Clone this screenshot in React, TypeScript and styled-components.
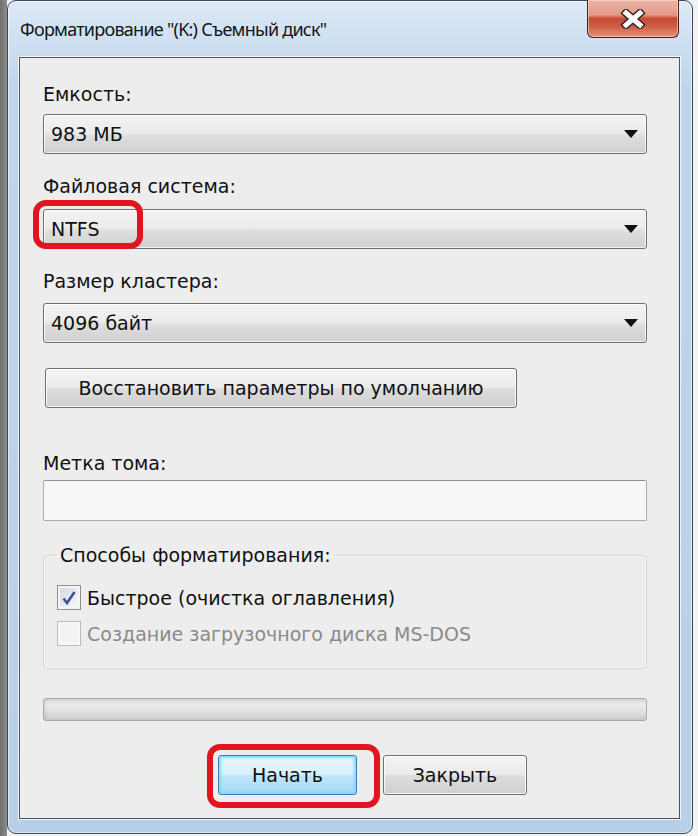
import styled, { createGlobalStyle } from "styled-components";

const GlobalStyle = createGlobalStyle`
  html, body {
    margin: 0;
    padding: 0;
  }
  body {
    width: 698px;
    height: 836px;
    overflow: hidden;
    background: linear-gradient(90deg, #6f6f6f 0, #8d8d8d 7px, #f3f3f3 7px);
    font-family: "DejaVu Sans", "Liberation Sans", sans-serif;
  }
`;

const Window = styled.div`
  box-sizing: border-box;
  margin-left: 7px;
  width: 686px;
  height: 834px;
  border: 1px solid #3b4656;
  border-radius: 9px;
  background: linear-gradient(180deg, #dde9f6 0%, #d2e2f2 30px, #bfd5eb 90px, #b8cfe8 100%);
  box-shadow: inset 0 0 0 1px rgba(255, 255, 255, 0.55);
  display: flex;
  flex-direction: column;
  padding: 0 12px 14px 11px;
`;

const TitleBar = styled.div`
  height: 56px;
  display: flex;
  justify-content: space-between;
  align-items: flex-start;
`;

const Title = styled.div`
  padding-left: 1px;
  font-family: "Noto Sans", sans-serif;
  font-size: 18px;
  letter-spacing: -0.75px;
  line-height: 56px;
  color: #151515;
`;

const CloseBtn = styled.div`
  box-sizing: border-box;
  margin: -1px 1px 0 0;
  width: 92px;
  height: 38px;
  border: 1px solid #4b1e17;
  border-top: none;
  border-radius: 0 0 6px 6px;
  background: linear-gradient(180deg, #eab4a6 0%, #e39a87 40%, #c94a34 50%, #cf5c42 70%, #e3937a 100%);
  box-shadow: inset 0 0 0 1px rgba(255, 220, 210, 0.55);
  display: flex;
  align-items: center;
  justify-content: center;
`;

const Client = styled.div`
  flex: 1;
  border: 1px solid #4a5563;
  background: #ededed;
  box-shadow: 0 0 0 1px rgba(255, 255, 255, 0.75);
  padding: 24px 32px 22px 23px;
  display: flex;
  flex-direction: column;
`;

const Label = styled.div<{ $mt?: number }>`
  margin-top: ${(p) => p.$mt ?? 0}px;
  height: 24px;
  font-size: 19px;
  line-height: 24px;
  color: #111;
`;

const Combo = styled.div<{ $mt: number }>`
  position: relative;
  box-sizing: border-box;
  margin-top: ${(p) => p.$mt}px;
  height: 40px;
  border: 1px solid #707070;
  border-radius: 3px;
  background: linear-gradient(180deg, #f3f3f3 0%, #ececec 45%, #dedede 55%, #d0d0d0 100%);
  box-shadow: inset 0 0 0 1px rgba(255, 255, 255, 0.7);
  display: flex;
  align-items: center;
  justify-content: space-between;
  padding: 0 8px 0 7px;
  font-size: 19px;
  color: #111;
`;

const Mark = styled.span<{ $l: number; $t: number; $w: number; $h: number }>`
  position: absolute;
  left: ${(p) => p.$l}px;
  top: ${(p) => p.$t}px;
  width: ${(p) => p.$w}px;
  height: ${(p) => p.$h}px;
  box-sizing: border-box;
  border: 6px solid #e1141f;
  border-radius: 13px;
  pointer-events: none;
`;

const Button = styled.button<{ $w: number; $mt?: number; $default?: boolean }>`
  position: relative;
  box-sizing: border-box;
  margin: ${(p) => p.$mt ?? 0}px 0 0 0;
  width: ${(p) => p.$w}px;
  height: 40px;
  border: 1px solid ${(p) => (p.$default ? "#3c7fb1" : "#707070")};
  border-radius: 3px;
  background: ${(p) =>
    p.$default
      ? "linear-gradient(180deg, #eaf6fd 0%, #d9f0fc 48%, #bee6fd 52%, #a7d9f5 100%)"
      : "linear-gradient(180deg, #f3f3f3 0%, #ebebeb 48%, #dddddd 52%, #cfcfcf 100%)"};
  box-shadow: ${(p) =>
    p.$default
      ? "inset 0 0 0 1px #7ee0fa, inset 0 0 3px 2px rgba(110, 210, 245, 0.7)"
      : "inset 0 0 0 1px rgba(255, 255, 255, 0.8)"};
  font-family: inherit;
  font-size: 19px;
  color: #111;
  padding: 0;
  cursor: default;
`;

const ResetButton = styled(Button)`
  margin-left: 2px;
`;

const TextBox = styled.div`
  box-sizing: border-box;
  margin-top: 5px;
  height: 41px;
  border: 1px solid #abadb3;
  border-top-color: #8f9298;
  border-radius: 2px;
  background: #f8f8f8;
`;

const Group = styled.fieldset`
  margin: 22px 0 0 0;
  padding: 0 13px 22px 13px;
  border: 1px solid #d0d6da;
  border-radius: 4px;
  box-shadow: inset 0 0 0 1px rgba(255, 255, 255, 0.6);
  display: flex;
  flex-direction: column;
  gap: 11px;
  min-width: 0;
`;

const Legend = styled.legend`
  padding: 0 3px;
  height: 24px;
  font-size: 19px;
  line-height: 24px;
  color: #111;
`;

const CheckRow = styled.div<{ $first?: boolean; $disabled?: boolean }>`
  margin-top: ${(p) => (p.$first ? 18 : 0)}px;
  display: flex;
  align-items: center;
  gap: 6px;
  height: 25px;
  font-size: 19px;
  color: ${(p) => (p.$disabled ? "#8a8a8a" : "#111")};
`;

const Box = styled.span<{ $disabled?: boolean }>`
  box-sizing: border-box;
  width: 24px;
  height: 25px;
  border: 1px solid ${(p) => (p.$disabled ? "#bcbcbc" : "#8e8f8f")};
  background: ${(p) =>
    p.$disabled ? "#f3f3f3" : "linear-gradient(135deg, #cfd5df 0%, #e9ecf1 55%, #f8f9fb 100%)"};
  box-shadow: inset 0 0 0 2px ${(p) => (p.$disabled ? "#f7f7f7" : "#f4f5f7")};
  display: flex;
  align-items: center;
  justify-content: center;
`;

const Progress = styled.div`
  box-sizing: border-box;
  margin-top: 29px;
  height: 23px;
  border: 1px solid #a9a9a9;
  border-radius: 3px;
  background: linear-gradient(180deg, #d6d6d6 0%, #ececec 25%, #e2e2e2 55%, #cbcbcb 100%);
  box-shadow: inset 2px 0 3px rgba(0, 0, 0, 0.08);
`;

const ButtonRow = styled.div`
  margin: 34px 0 0 175px;
  display: flex;
  gap: 26px;
`;

const Arrow = () => (
  <svg width="14" height="8" viewBox="0 0 14 8">
    <path d="M0 0 H14 L7 8 Z" fill="#111" />
  </svg>
);

export default function App() {
  return (
    <>
      <GlobalStyle />
      <Window>
        <TitleBar>
          <Title>Форматирование "(K:) Съемный диск"</Title>
          <CloseBtn>
            <svg width="26" height="20" viewBox="0 0 26 20">
              <path d="M6 4 L20 16 M20 4 L6 16" stroke="#3a2624" strokeWidth="8" strokeLinecap="square" />
              <path d="M6 4 L20 16 M20 4 L6 16" stroke="#fff" strokeWidth="5" strokeLinecap="square" />
            </svg>
          </CloseBtn>
        </TitleBar>
        <Client>
          <Label>Емкость:</Label>
          <Combo $mt={8}>
            <span>983 МБ</span>
            <Arrow />
          </Combo>
          <Label $mt={20}>Файловая система:</Label>
          <Combo $mt={11}>
            <span>NTFS</span>
            <Arrow />
            <Mark $l={-11} $t={-10} $w={110} $h={49} />
          </Combo>
          <Label $mt={20}>Размер кластера:</Label>
          <Combo $mt={10}>
            <span>4096 байт</span>
            <Arrow />
          </Combo>
          <ResetButton $w={472} $mt={25}>
            Восстановить параметры по умолчанию
          </ResetButton>
          <Label $mt={43}>Метка тома:</Label>
          <TextBox />
          <Group>
            <Legend>Способы форматирования:</Legend>
            <CheckRow $first>
              <Box>
                <svg width="16" height="16" viewBox="0 0 16 16">
                  <path d="M2.5 8.5 L6 13 L13.5 2" fill="none" stroke="#3e5190" strokeWidth="2.6" />
                </svg>
              </Box>
              Быстрое (очистка оглавления)
            </CheckRow>
            <CheckRow $disabled>
              <Box $disabled />
              Создание загрузочного диска MS-DOS
            </CheckRow>
          </Group>
          <Progress />
          <ButtonRow>
            <Button $w={139} $default>
              Начать
              <Mark $l={-12} $t={-12} $w={173} $h={64} />
            </Button>
            <Button $w={144}>Закрыть</Button>
          </ButtonRow>
        </Client>
      </Window>
    </>
  );
}
